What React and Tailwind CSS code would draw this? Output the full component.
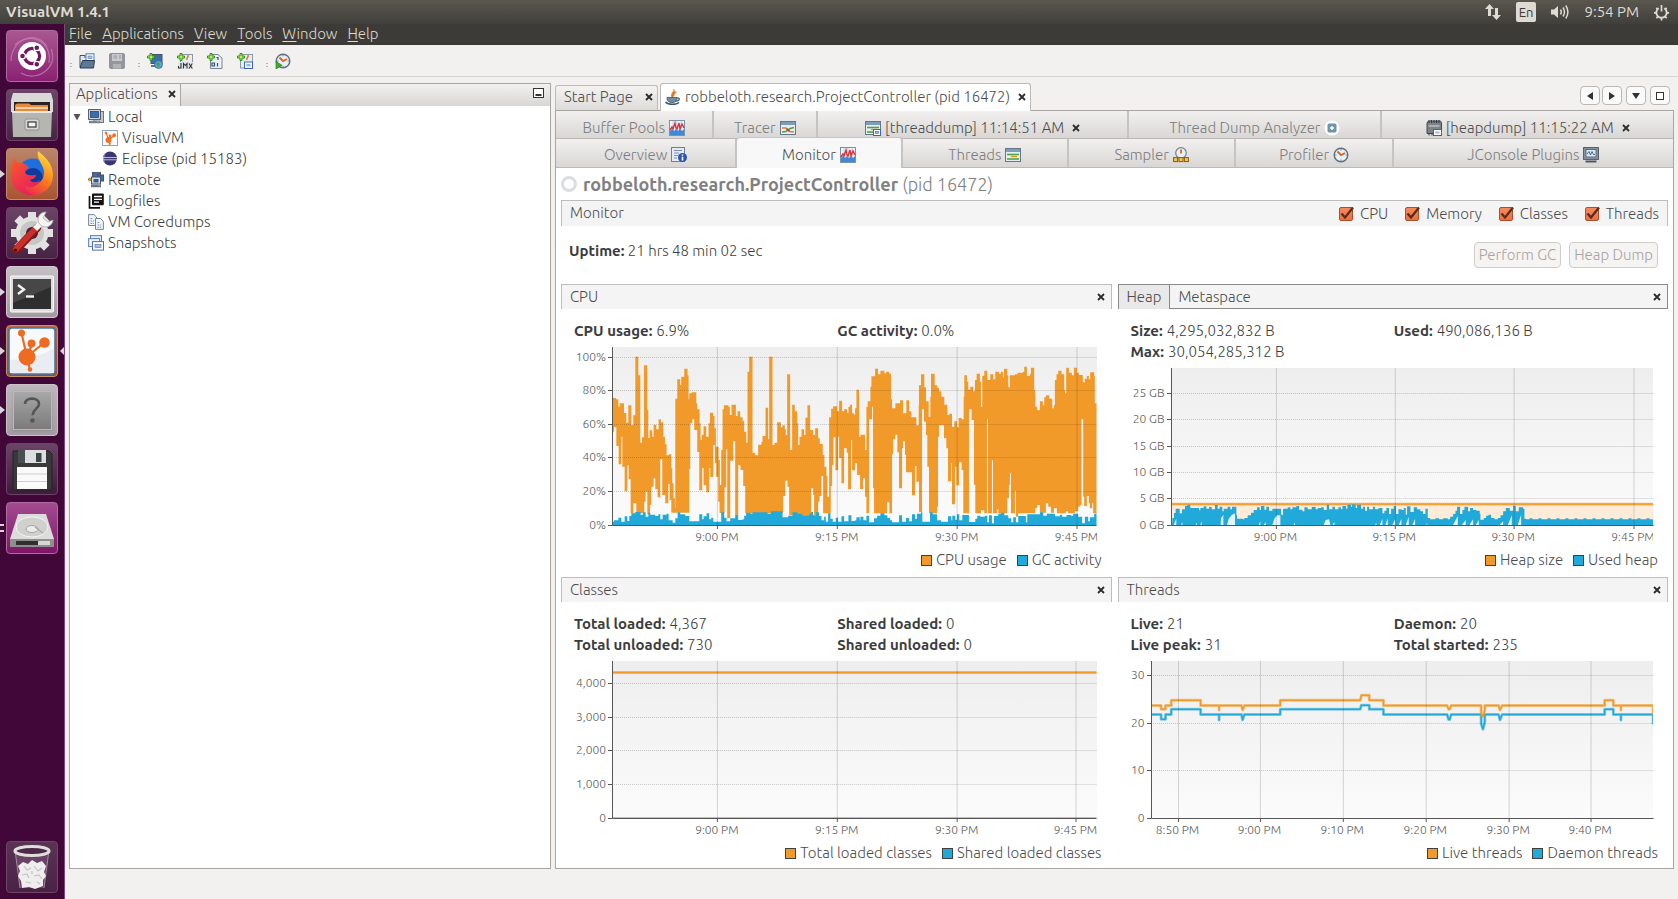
import React from "react";

/* ---------- small drawings ---------- */

function Cross({ className = "" }) {
  return (
    <svg viewBox="0 0 8 8" className={"h-2 w-2 shrink-0 " + className} aria-hidden="true">
      <path d="M1 1L7 7M7 1L1 7" stroke="#2b2b2b" strokeWidth="1.8" />
    </svg>
  );
}

function Icon({ children, className = "" }) {
  return (
    <svg viewBox="0 0 16 16" className={"h-4 w-4 shrink-0 " + className} aria-hidden="true">
      {children}
    </svg>
  );
}

const Plus = () => (
  <path d="M3 0.5H5V3H7.5V5H5V7.5H3V5H0.5V3H3Z" fill="#b9f05c" stroke="#2f8f1d" strokeWidth="1" />
);
const MonitorIcon = () => (
  <Icon>
    <rect x="0.5" y="0.5" width="15" height="15" fill="#eef5fb" stroke="#7d92a8" />
    <path d="M4 1V15M8 1V15M12 1V15" stroke="#c6d3e0" strokeWidth="1" />
    <path d="M1 15V11L3 9L5 11L7 9L9 11L11 9L13 11L15 9V15Z" fill="#3f8ad6" />
    <path d="M1 10L3 7L4 9L6 3L7 8L8 9L10 3L11 9L13 4L15 8" fill="none" stroke="#d6333c" strokeWidth="1.4" />
  </Icon>
);
const ThreadsIcon = ({ cam }) => (
  <Icon>
    <rect x="0.5" y="1.5" width="15" height="13" fill="#e9eef3" stroke="#64788c" />
    <rect x="1" y="2" width="14" height="3" fill="#7f9cba" />
    <path d="M2 7.5H14" stroke="#4fa53c" strokeWidth="1.6" />
    <path d="M6 9.5H12" stroke="#e0912b" strokeWidth="1.2" />
    <path d="M2 12H14" stroke="#4fa53c" strokeWidth="1.6" />
    {cam && <rect x="8.5" y="9.5" width="7" height="6" fill="#fff" stroke="#3d64b4" />}
    {cam && <rect x="10.5" y="11.5" width="3" height="2" fill="#9db8ea" stroke="#3d64b4" strokeWidth="0.6" />}
  </Icon>
);
const TracerIcon = () => (
  <Icon>
    <rect x="0.5" y="1.5" width="15" height="13" fill="#e9eef3" stroke="#64788c" />
    <rect x="1" y="2" width="14" height="3" fill="#7f9cba" />
    <path d="M2 8L6 8L10 11.500L14 12" stroke="#e0802b" strokeWidth="1.6" fill="none" />
    <path d="M2 12L6 11.500L10 8.500L14 7.500" stroke="#4fa53c" strokeWidth="1.6" fill="none" />
    <path d="M6.500 8.500L9.500 11.500" stroke="#d6333c" strokeWidth="1.4" />
  </Icon>
);
const OverviewIcon = () => (
  <Icon>
    <rect x="0.5" y="0.5" width="13" height="14" fill="#e4ebf3" stroke="#6c8096" />
    <path d="M3 3.5H11M3 6H8M3 8.5H7M3 11H6" stroke="#7e93ab" strokeWidth="1" />
    <circle cx="11.5" cy="10.5" r="4.5" fill="#2e55b0" />
    <path d="M11.5 7.5V8.8M11.5 9.8V13.4" stroke="#fff" strokeWidth="1.6" />
  </Icon>
);
const ClockIcon = ({ play }) => (
  <Icon>
    <circle cx="8" cy="8" r="6.8" fill="#e8f1f8" stroke="#5d6f80" strokeWidth="1.4" />
    <path d="M8 2.2V3.4M8 12.6V13.8M2.2 8H3.4M12.6 8H13.8" stroke="#5d6f80" />
    <path d="M4.5 4.5L8 8L12 6" stroke="#e2641b" strokeWidth="1.9" fill="none" />
    {play && <path d="M1 8.5L7 12.2L1 16Z" fill="#3fae2a" stroke="#1f6f14" strokeWidth="0.6" />}
  </Icon>
);
const SamplerIcon = () => (
  <Icon>
    <circle cx="8" cy="6" r="5.3" fill="#e8f1f8" stroke="#6f8090" strokeWidth="1.2" />
    <path d="M8 2.5V6.5" stroke="#e2641b" strokeWidth="1.8" />
    <rect x="0.6" y="10.6" width="4" height="4" fill="#f6c64b" stroke="#8a5a10" />
    <rect x="6" y="10.6" width="4" height="4" fill="#f6c64b" stroke="#8a5a10" />
    <rect x="11.4" y="10.6" width="4" height="4" fill="#f6c64b" stroke="#8a5a10" />
  </Icon>
);
const AnalyzerIcon = () => (
  <Icon>
    <circle cx="8" cy="8" r="7.5" fill="#fff" />
    <rect x="3.5" y="3.5" width="9" height="9" rx="1.5" fill="#6e95ab" />
    <path d="M8 6V10M6 8H10" stroke="#fff" strokeWidth="1.4" />
  </Icon>
);
const HeapDumpIcon = () => (
  <Icon>
    <path d="M1 3L2.5 1H14.500L15.500 3V13.500H1Z" fill="#7d8389" stroke="#43484e" />
    <path d="M3 0V3M5.500 0V3M8 0V3M10.500 0V3M13 0V3M3 13V15.500M6 13V15.500" stroke="#33383c" />
    <rect x="2.500" y="5" width="11" height="2" fill="#a9afb5" />
    <rect x="7.500" y="9.500" width="8" height="6" fill="#fff" stroke="#3d64b4" />
    <rect x="9.500" y="11.500" width="4" height="2" fill="#9db8ea" />
  </Icon>
);
const ConsoleIcon = () => (
  <Icon>
    <rect x="0.6" y="0.6" width="14.800" height="11.800" fill="#8e9aa5" stroke="#4c5863" />
    <rect x="3" y="2.500" width="10" height="7.500" fill="#dbe7f1" stroke="#4c5863" strokeWidth="0.8" />
    <path d="M4 7L6 4.500L7.500 8L9 4.500L10.500 7.500H12" stroke="#2c5d8f" fill="none" strokeWidth="0.9" />
    <path d="M2.500 14.500H13.500" stroke="#4c5863" strokeWidth="2" />
  </Icon>
);
const JavaIcon = () => (
  <Icon>
    <path d="M8.500 0C10.500 2.500 4.500 4 7 8.500C10.500 7 7.500 5.500 11.500 3C9.500 3.500 9.500 2 8.500 0Z" fill="#e8761c" stroke="#e8761c" strokeWidth="0.600" />
    <path d="M2 8.500H12C12 12.500 10 13.500 7 13.500C4 13.500 2 12.500 2 8.500Z" fill="#6f8fa8" stroke="#3b5468" strokeWidth="0.8" />
    <path d="M12 9C15.500 8.500 15 12 10.500 12.200" fill="none" stroke="#3b5468" strokeWidth="1.200" />
    <path d="M0.500 13C3 16 11 16 14 13.500" fill="none" stroke="#3b5468" strokeWidth="1.600" />
  </Icon>
);

/* toolbar */
const OpenIcon = () => (
  <Icon>
    <path d="M1 14V2.500H6V5" fill="#dfe8f1" stroke="#39506b" />
    <rect x="7" y="0.8" width="8" height="7" fill="#fff" stroke="#4f78b5" />
    <rect x="9" y="3" width="4" height="2.500" fill="#a9c2ea" stroke="#4f78b5" strokeWidth="0.6" />
    <path d="M1 15L3.500 7.500H15.500L14.500 15Z" fill="#5d7896" stroke="#2a3e57" />
  </Icon>
);
const SaveIcon = () => (
  <Icon>
    <rect x="0.6" y="0.6" width="14.800" height="14.800" rx="1" fill="#94989d" stroke="#8a8e93" />
    <rect x="3" y="1" width="10" height="7" fill="#c6c9cd" />
    <path d="M4.500 3H8M4.500 5H8M10 3H12M10 5H12" stroke="#94989d" />
    <rect x="4" y="11" width="8" height="4.500" fill="#b0b3b8" />
  </Icon>
);
const AddHostIcon = () => (
  <Icon>
    <rect x="4" y="1.500" width="11" height="9" fill="#3a6db2" stroke="#49535e" />
    <path d="M4 13H12" stroke="#6c757f" strokeWidth="2" />
    <circle cx="11.500" cy="11.500" r="4" fill="#5aa4dc" stroke="#2f5f93" strokeWidth="0.7" />
    <path d="M9 10L12 9L13 12L11 14Z" fill="#4aa33a" />
    <Plus />
  </Icon>
);
const AddJmxIcon = () => (
  <Icon>
    <rect x="3.500" y="1.500" width="12" height="13.500" fill="#e6edf5" stroke="#8a98a8" />
    <path d="M11 2C12 4 9 5 10 7" stroke="#e8761c" fill="none" strokeWidth="1.500" />
    <rect x="1" y="9" width="15" height="7" fill="#e3e7ea" />
    <path d="M4 10V15H1.500V13M6.500 15.500V10.500L8.300 12.500L10 10.500V15.500M12 10.500L15.300 15.500M15.300 10.500L12 15.500" stroke="#2c3238" strokeWidth="1.100" fill="none" />
    <Plus />
  </Icon>
);
const AddCoreIcon = () => (
  <Icon>
    <path d="M3.500 1.500H11L15 5V15.500H3.500Z" fill="#eaf0f6" stroke="#75869a" />
    <path d="M9.500 4.500H11V7M5 10H7.500V13H5ZM10.500 10V13.500" stroke="#3e4f63" fill="none" strokeWidth="1.200" />
    <Plus />
  </Icon>
);
const AddSnapIcon = () => (
  <Icon>
    <rect x="3.500" y="1.500" width="12" height="13.500" fill="#e6edf5" stroke="#8a98a8" />
    <path d="M11 2C12 4 9 5 10 7" stroke="#e8761c" fill="none" strokeWidth="1.500" />
    <rect x="7.500" y="9" width="8" height="6.500" fill="#fff" stroke="#3d64b4" />
    <rect x="9.500" y="11" width="4" height="2.500" fill="#9db8ea" />
    <Plus />
  </Icon>
);

/* tree */
const LocalIcon = () => (
  <Icon>
    <rect x="6" y="2.500" width="9.500" height="11" fill="#c4c9ce" stroke="#6c757f" />
    <rect x="0.6" y="0.6" width="11.800" height="9.800" fill="#dfe3e7" stroke="#49535e" />
    <rect x="2.500" y="2.500" width="8" height="6" fill="#3a6db2" stroke="#23477a" strokeWidth="0.8" />
    <path d="M1 13H12" stroke="#7a838c" strokeWidth="2.500" />
    <path d="M9 12.500H11" stroke="#62d13c" />
  </Icon>
);
const VvmIcon = () => (
  <Icon>
    <rect x="0.5" y="0.5" width="15" height="15" fill="#fdfdfd" stroke="#8aa6c6" />
    <path d="M4 3L7 10L9 5.500M7 10L12 5.500M7 10L8 14" fill="none" stroke="#ef6f23" strokeWidth="1.200" />
    <circle cx="6.500" cy="10" r="3" fill="#ef6f23" />
    <circle cx="4" cy="3" r="1.300" fill="#ef6f23" />
    <circle cx="8" cy="6" r="1.400" fill="#ef6f23" />
    <circle cx="12.200" cy="5.200" r="1.900" fill="#ef6f23" />
    <circle cx="7.700" cy="14" r="1" fill="#ef6f23" />
  </Icon>
);
const EclipseIcon = () => (
  <Icon>
    <circle cx="8" cy="7.500" r="7" fill="#3c3673" />
    <path d="M1 7.500A7 7 0 0 1 5 1.200A9 9 0 0 0 4 13.300A7 7 0 0 1 1 7.500Z" fill="#8d8cc4" />
    <path d="M1 6.500H15M1 8.800H15" stroke="#c3cbe8" strokeWidth="0.9" />
  </Icon>
);
const RemoteIcon = () => (
  <Icon>
    <rect x="4.500" y="0.6" width="8" height="6" fill="#3a6db2" stroke="#49535e" />
    <rect x="9.500" y="3" width="6" height="6" fill="#3a6db2" stroke="#49535e" />
    <rect x="3.500" y="5" width="9" height="7" fill="#d7dce1" stroke="#49535e" />
    <rect x="5.500" y="7" width="5" height="3.500" fill="#2b5ca0" />
    <path d="M3 14H13" stroke="#6c757f" strokeWidth="2.500" />
    <path d="M0 7.500H3" stroke="#49535e" />
    <circle cx="1.800" cy="7.500" r="1.400" fill="#f0a22c" stroke="#8a5a10" strokeWidth="0.6" />
    <path d="M10 13.500H12" stroke="#62d13c" />
  </Icon>
);
const LogIcon = () => (
  <Icon>
    <path d="M1.500 3V14.800H12" fill="none" stroke="#111" strokeWidth="1.700" />
    <rect x="4" y="0.5" width="11.800" height="11.800" rx="1" fill="#111" />
    <path d="M6 3.500H14M6 6.300H14M6 9.200H11" stroke="#fff" strokeWidth="1.300" />
  </Icon>
);
const CoreIcon = () => (
  <Icon>
    <path d="M0.6 0.6H6L8.500 3V11.500H0.6Z" fill="#f0f4f8" stroke="#75869a" />
    <path d="M7.500 4.500H12.500L15.400 7.500V15.400H7.500Z" fill="#f0f4f8" stroke="#75869a" />
    <path d="M2.500 4.500H5M2.500 7H6M2.500 9.500H6M9.500 8.500H12M9.500 11H13.500M9.500 13.300H13.500" stroke="#8296ab" strokeDasharray="1.500 0.700" />
  </Icon>
);
const SnapIcon = () => (
  <Icon>
    <rect x="2.500" y="0.6" width="11" height="8" fill="#e3ebf8" stroke="#5b7fbe" />
    <rect x="0.6" y="3.600" width="11" height="8" fill="#eef3fb" stroke="#5b7fbe" />
    <rect x="4.500" y="6.600" width="11" height="8.500" fill="#fff" stroke="#4a6eb0" />
    <rect x="7" y="9.500" width="6" height="3" fill="#a9bde4" stroke="#4a6eb0" strokeWidth="0.6" />
  </Icon>
);

/* ---------- launcher ---------- */

const tile = "relative flex h-[52px] w-[52px] items-center justify-center rounded-[4px] border ";

const launcher = [
  {
    name: "Search your computer",
    cls: "border-[#b06a9f] bg-linear-to-b from-[#a8578f] to-[#8a1f73]",
    art: (
      <svg viewBox="0 0 50 50" className="h-[50px] w-[50px]">
        <g fill="none" stroke="#c98bbb" strokeWidth="1.2" opacity="0.7">
          <path d="M4 30C4 8 30 -2 40 16" /><path d="M44 18C52 36 30 52 14 42" /><path d="M8 14C22 0 46 10 42 32" />
        </g>
        <circle cx="25" cy="25" r="14" fill="#fff" />
        <circle cx="25" cy="25" r="7.500" fill="none" stroke="#6e1a5b" strokeWidth="3.400" />
        <path d="M25 25L12 25M25 25L31.500 13.700M25 25L31.500 36.300" stroke="#fff" strokeWidth="1.800" />
        <circle cx="25" cy="25" r="5.800" fill="#fff" />
        <g fill="#6e1a5b" stroke="#fff" strokeWidth="1.200"><circle cx="15.500" cy="25" r="2.900" /><circle cx="29.800" cy="16.800" r="2.900" /><circle cx="29.800" cy="33.200" r="2.900" /></g>
      </svg>
    ),
  },
  {
    name: "Files",
    cls: "border-[#6d4568] bg-linear-to-b from-[#6b4468] to-[#472443]",
    art: (
      <svg viewBox="0 0 50 50" className="h-[50px] w-[50px]">
        <path d="M6 3H44L46 10V22H4V10Z" fill="#d9d9d7" />
        <rect x="7" y="12" width="36" height="14" fill="#2a2220" />
        <path d="M8 15L10 13.500H22L24 15H41V26H8Z" fill="#e58a3c" />
        <path d="M9 18H41" stroke="#fbe8cf" strokeWidth="1.400" />
        <path d="M5 21H45L44 47H6Z" fill="#b5b5b2" />
        <path d="M5 21H45V23H5Z" fill="#e6e6e4" />
        <rect x="18" y="29" width="14" height="11" rx="2" fill="#d8d8d6" stroke="#8f8f8c" />
        <rect x="21" y="32" width="8" height="5" fill="#f4f4f4" stroke="#444" strokeWidth="1.300" />
      </svg>
    ),
  },
  {
    name: "Firefox",
    run: true,
    cls: "border-[#c48c6d] bg-linear-to-b from-[#b9856a] to-[#a8552f]",
    art: (
      <svg viewBox="0 0 50 50" className="h-[50px] w-[50px]">
        <defs>
          <linearGradient id="ffy" x1="0.2" y1="1" x2="0.8" y2="0"><stop offset="0" stopColor="#e8145c" /><stop offset="0.5" stopColor="#fb7a1c" /><stop offset="1" stopColor="#ffe43a" /></linearGradient>
          <linearGradient id="ffr" x1="0" y1="0" x2="0.6" y2="1"><stop offset="0" stopColor="#ff5a24" /><stop offset="1" stopColor="#e5205f" /></linearGradient>
        </defs>
        <circle cx="26" cy="25" r="15.500" fill="#1d6fe0" />
        <circle cx="26" cy="29" r="10" fill="#123a9c" />
        <path d="M31 2C37 7 46 14 46 26C46 38 37 46 25 46C13 46 4 37 4 26C6 30 12 37 22 37C32 37 38 30 37 22C36 15 29 10 31 2Z" fill="url(#ffy)" />
        <path d="M8 8C8 12 9 13 11 14C15 13 20 15 22 19C19 20 17 22 19 25C22 27 26 26 29 26C29 29 26 30 23 31C25 34 30 34 33 31C31 37 24 40 18 37C18 41 22 45 27 46C14 47 4 38 4 26C4 18 6 12 8 8Z" fill="url(#ffr)" />
      </svg>
    ),
  },
  {
    name: "System Settings",
    cls: "border-[#6d4568] bg-linear-to-b from-[#6b4468] to-[#472443]",
    art: (
      <svg viewBox="0 0 50 50" className="h-[50px] w-[50px]">
        <g stroke="#e2e2e0" strokeWidth="8"><path d="M25 4V46M4 25H46M10.200 10.200L39.800 39.800M39.800 10.200L10.200 39.800" /></g>
        <circle cx="25" cy="25" r="16.500" fill="#e2e2e0" />
        <circle cx="25" cy="25" r="12" fill="#c6c6c4" />
        <circle cx="25" cy="25" r="6" fill="#43203f" />
        <path d="M9 42L30 20" stroke="#8c1515" strokeWidth="8" strokeLinecap="round" />
        <path d="M9 41L30 19" stroke="#c9302c" strokeWidth="5.500" strokeLinecap="round" />
        <path d="M28 21L36 13" stroke="#f4f4f2" strokeWidth="6" />
        <path d="M39 4A7.500 7.500 0 1 0 46 12L41 14L36 10Z" fill="#f4f4f2" stroke="#b0b0ae" strokeWidth="0.8" />
        <circle cx="8.500" cy="42" r="1.600" fill="#4a0a0a" />
      </svg>
    ),
  },
  {
    name: "Terminal",
    run: true,
    cls: "border-[#cfc8cd] bg-linear-to-b from-[#c6bfc5] to-[#a49ba2]",
    art: (
      <svg viewBox="0 0 50 50" className="h-[50px] w-[50px]">
        <rect x="3.500" y="9" width="43" height="36" rx="1" fill="#dedede" stroke="#f7f7f7" />
        <rect x="6" y="12" width="38" height="30" fill="#2e2e2e" />
        <path d="M6 12H44V20L6 36Z" fill="#474747" />
        <path d="M11 18L17 22.500L11 27" fill="none" stroke="#f2f2f2" strokeWidth="2.400" />
        <path d="M19 29.500H27" stroke="#f2f2f2" strokeWidth="2.400" />
      </svg>
    ),
  },
  {
    name: "VisualVM",
    run: true,
    active: true,
    cls: "border-[#d08e66] bg-linear-to-b from-[#b5683f] to-[#9c4a22]",
    art: (
      <svg viewBox="0 0 50 50" className="h-[50px] w-[50px]">
        <rect x="2" y="2" width="46" height="46" rx="3" fill="#f8f9fb" stroke="#3f78ad" strokeWidth="1.600" />
        <path d="M3 34Q28 34 47 22V47H3Z" fill="#e9ecf0" />
        <path d="M14.500 7L20 31M25 18L20 31L37 16.500M20 31L23 44" fill="none" stroke="#ee6c22" strokeWidth="2.200" />
        <g fill="#ee6c22"><circle cx="20" cy="31" r="8.500" /><circle cx="14.500" cy="7" r="3.500" /><circle cx="24.500" cy="17.500" r="4" /><circle cx="37.500" cy="16.500" r="5.300" /><circle cx="23" cy="43.500" r="2.300" /></g>
      </svg>
    ),
  },
  {
    name: "Unknown application",
    run: true,
    cls: "border-[#c9c4c8] bg-linear-to-b from-[#bdb6bc] to-[#a39ca2]",
    art: (
      <span className="flex h-[39px] w-[39px] items-center justify-center border border-[#b9b9b9] bg-linear-to-b from-[#a8a8a8] to-[#7b7b7b] shadow">
        <svg viewBox="0 0 24 32" className="h-7 w-6">
          <path d="M4 9C4 1 20 1 20 9C20 14 13 15 12.500 22" fill="none" stroke="#555" strokeWidth="3" />
          <circle cx="12.500" cy="28" r="2.600" fill="#555" />
        </svg>
      </span>
    ),
  },
  {
    name: "Floppy disk",
    cls: "border-[#6d4568] bg-linear-to-b from-[#6b4468] to-[#3f1b3b]",
    art: (
      <svg viewBox="0 0 50 50" className="h-[50px] w-[50px]">
        <path d="M6 7H42L45 10V46H6Z" fill="#393939" stroke="#222" />
        <rect x="11" y="6" width="28" height="13" fill="#4b4f52" />
        <rect x="18" y="6" width="21" height="13" fill="#dddedf" />
        <rect x="29" y="9" width="5.500" height="9" fill="#3d4347" />
        <rect x="10" y="23" width="30" height="22" fill="#fafafa" />
        <path d="M10 30H40M10 37.500H40" stroke="#cfcfcf" />
      </svg>
    ),
  },
  {
    name: "Disk drive",
    mark: true,
    cls: "border-[#b06a9f] bg-linear-to-b from-[#a34b91] to-[#7d1569]",
    art: (
      <svg viewBox="0 0 50 50" className="h-[50px] w-[50px]">
        <path d="M11 11H39L47 36V44H3V36Z" fill="#dcdcda" />
        <path d="M3 36H47V44H3Z" fill="#8e8e8c" />
        <rect x="9" y="38" width="31" height="4" fill="#2f2f2f" />
        <rect x="31" y="38" width="12" height="4" fill="#d6d6d4" />
        <ellipse cx="25" cy="24" rx="16" ry="10" fill="#d0d0ce" stroke="#f4f4f2" />
        <ellipse cx="25" cy="26" rx="6" ry="3.500" fill="#ececea" stroke="#a5a5a3" />
        <path d="M36 30L28 24" stroke="#aaa" strokeWidth="1.500" />
      </svg>
    ),
  },
];

function Trash() {
  return (
    <svg viewBox="0 0 50 50" className="h-[50px] w-[50px]">
      <path d="M8 8L13 46H37L42 8Z" fill="#6d4868" opacity="0.8" />
      <path d="M8 8L13 46M42 8L37 46" stroke="#a58aa1" />
      <path d="M11 24L16 20L21 22L25 18L30 21L35 19L39 24L37 30L39 34L36 38L36 44L28 47L22 45L15 46L14 39L11 34L13 29Z" fill="#eeeeec" />
      <path d="M17 24L20 28L24 26M27 24L31 29L35 26M15 33L20 32L22 36M27 34L32 33L35 37M25 29V32M19 40L24 41M30 40L33 42" stroke="#c4c4c1" strokeWidth="1.200" fill="none" />
      <ellipse cx="25" cy="9" rx="17" ry="4.500" fill="#4c2a48" stroke="#dededc" strokeWidth="3.200" />
    </svg>
  );
}

function Launcher() {
  return (
    <nav aria-label="Launcher" className="flex w-[65px] shrink-0 flex-col items-center justify-between border-r border-[#7b4a78] bg-[#400738] pt-1.5 pb-1.5">
      <div className="flex w-full flex-col items-center gap-[7px]">
        {launcher.map((l) => (
          <div key={l.name} className="relative flex w-full justify-center">
            {l.run && <span className="absolute top-[22px] left-0 h-0 w-0 border-y-4 border-l-5 border-y-transparent border-l-[#d8d4d7]" />}
            {l.mark && <span className="absolute top-[22px] left-0 h-2 w-1 border-y-2 border-[#d8d4d7]" />}
            {l.active && <span className="absolute top-[22px] right-0 h-0 w-0 border-y-4 border-r-4 border-y-transparent border-r-[#d8d4d7]" />}
            <button aria-label={l.name} className={tile + l.cls}>{l.art}</button>
          </div>
        ))}
      </div>
      <button aria-label="Trash" className={tile + "border-[#6d4568] bg-linear-to-b from-[#5a3355] to-[#4a2246]"}>
        <Trash />
      </button>
    </nav>
  );
}

/* ---------- charts ---------- */

const ORANGE = "#f19a29";
const BLUE = "#21aad9";

function Chart({ w, h, plotClass, padClass, ys, xs, children, box }) {
  return (
    <div>
      <div className={"relative mt-1.5 mr-[15px] bg-linear-to-b from-[#eeeeee] to-[#fbfbfb] " + plotClass}>
        <svg viewBox={box} preserveAspectRatio="none" className="absolute inset-0 h-full w-full" aria-hidden="true">
          {children}
        </svg>
        <svg viewBox={`0 0 ${w} ${h}`} preserveAspectRatio="none" className="absolute inset-0 h-full w-full overflow-visible" shapeRendering="crispEdges" aria-hidden="true">
          {ys.map(([y]) => (
            <path key={y} d={`M0 ${y + 0.5}H${w}`} stroke="#000" strokeOpacity="0.2" strokeDasharray="1 1" />
          ))}
          {xs.map(([x]) => (
            <path key={x} d={`M${x + 0.5} 0V${h}`} stroke="#000" strokeOpacity="0.16" />
          ))}
          <path d={`M0.5 0V${h + 0.5}H${w}`} fill="none" stroke="#555" />
          {ys.map(([y]) => (
            <path key={y} d={`M-4 ${y + 0.5}H0`} stroke="#555" />
          ))}
          {xs.map(([x]) => (
            <path key={x} d={`M${x + 0.5} ${h}V${h + 4}`} stroke="#555" />
          ))}
        </svg>
        {ys.map(([y, t]) => (
          <span key={t} className="absolute right-full mr-1.5 -translate-y-1/2 text-xs leading-4 whitespace-nowrap text-[#5a5a5a]" style={{ top: `${(y / h) * 100}%` }}>
            {t}
          </span>
        ))}
      </div>
      <div className={"mr-[15px] overflow-hidden " + padClass}>
        <div className="relative h-[25px]">
          {xs.map(([x, t]) => (
            <span key={t} className="absolute top-1 -translate-x-1/2 text-xs leading-4 whitespace-nowrap text-[#5a5a5a]" style={{ left: `${(x / w) * 100}%` }}>
              {t}
            </span>
          ))}
        </div>
      </div>
    </div>
  );
}

const cpuTop1 = "8:174 20:178 27:200 31:190 44:219 51:248 57:196 66:255 72:226 78:50 87:106 93:308 98:292 104:76 114:210 117:294 121:271 129:290 133:254 141:268 148:238 155:247 162:290 167:313 172:346 178:343 186:385 189:430 193:475 197:505 198:176 204:118 213:135 216:110 225:86 235:106 238:178 240:160 248:157 261:190 264:208 271:250 274:300 278:284 283:259 291:290 298:250 302:218 312:228 316:265 320:320 328:360 332:435 336:330 340:208 344:196 358:200 362:225 367:194 380:228 385:214 393:232 400:242 405:275 411:308 415:95 420:50 430:338 438:346 447:314 457:305 460:288 469:203 477:298 480:50 490:315 496:308 504:247 515:262 520:256 527:268 530:285 534:103 543:330 549:194 557:214 564:250 567:315 571:290 577:268 585:285 589:233 595:196 603:270 612:285 618:265 627:295 632:312 641:345 646:380 652:408 655:470 660:232 666:206 672:199 684:214 690:182 699:214 705:208 714:219 718:200 723:194 729:220 735:224";
const cpuTop2 = "0:205 4:149 12:290 16:284 30:330 34:200 38:184 46:140 49:109 60:86 69:103 76:92 88:100 93:95 103:101 108:178 111:205 121:190 135:181 144:220 154:181 162:214 169:232 184:256 191:196 192:136 198:103 208:142 213:184 221:230 226:170 228:101 239:136 247:143 252:154 259:170 268:194 277:225 283:221 291:260 298:244 306:262 311:234 320:238 326:170 328:106 336:125 340:149 346:140 355:154 360:120 365:101 375:125 378:200 382:107 388:92 397:120 406:103 415:118 421:95 432:101 438:95 444:113 447:86 457:106 460:142 465:106 480:103 488:98 504:95 508:80 516:108 525:103 528:83 538:150 541:200 547:211 555:184 564:196 568:172 573:166 583:176 592:205 597:195 600:120 605:103 610:92 620:103 628:150 631:160 634:83 642:98 651:106 657:83 666:98 672:105 684:127 690:116 696:108 702:118 706:97 718:108 720:190";
const cpuLow1 = "8:275 14:262 21:318 28:373 36:290 39:380 46:454 54:376 58:418 64:520 72:490 81:520 105:485 109:455 114:522 122:495 126:440 133:415 138:448 145:472 153:358 159:465 168:490 177:432 181:480 186:518 240:387 243:250 249:238 255:270 264:336 270:451 279:384 283:436 291:457 300:384 303:411 312:315 317:370 321:410 327:485 331:519 346:442 351:328 354:535 363:362 372:304 378:524 387:376 394:390 402:438 408:520 522:468 528:422 535:440 540:526 606:445 612:465 615:525 627:485 631:468 637:408 642:520 665:438 669:375 673:292 679:391 687:290 690:354 697:430 705:325 713:338 717:448 726:300 729:391";
const cpuLow2 = "0:370 6:405 15:447 24:415 30:470 34:520 42:238 51:200 54:445 57:520 96:487 103:520 111:343 114:298 121:284 127:337 132:445 141:325 144:304 150:345 153:397 171:466 180:378 184:425 192:517 201:208 207:245 213:285 217:380 222:520 246:500 249:290 252:256 267:295 274:325 279:424 289:370 291:493 300:380 304:436 312:367 320:390 325:520 342:208 350:240 357:434 361:520 378:511 388:520 396:238 399:520 411:361 414:520 426:508 430:520 457:475 462:436 465:400 468:520 480:454 483:530 490:520 541:505 547:495 555:518 573:490 580:500 588:518 597:505 606:520 633:514 640:520 660:514 670:500 675:496 680:238 685:470 688:498 696:468 702:490 705:505 712:490 715:520";
const gc1 = "8:545 14:541 27:533 36:545 46:529 54:543 60:528 66:520 78:516 94:524 101:517 109:530 117:518 123:524 138:528 147:523 153:538 160:524 172:521 178:541 190:548 198:535 205:517 213:523 228:528 240:544 270:523 279:538 283:529 292:520 300:538 306:533 312:545 336:517 345:533 352:544 363:535 378:524 387:540 400:538 405:527 411:518 424:521 430:517 475:521 485:514 520:532 537:527 550:517 565:521 580:526 600:521 606:516 612:526 620:517 630:528 637:541 645:530 650:545 657:520 664:536 671:545 680:533 687:545 697:529 705:544 718:526 727:543";
const gc2 = "0:541 4:532 14:541 16:530 25:541 34:527 42:547 57:535 66:527 76:520 88:526 97:534 105:541 111:547 132:526 141:545 153:534 162:544 171:523 180:536 186:521 198:517 202:545 225:517 233:523 246:541 258:545 279:529 289:541 292:527 301:539 306:523 313:541 322:525 342:546 361:536 367:527 376:530 390:527 397:547 402:526 411:550 417:528 430:521 438:518 448:526 460:535 469:547 475:532 483:547 490:528 513:547 517:523 555:517 565:527 576:521 600:529 615:524 622:530 635:525 648:527 655:521 670:530 682:550 690:530 700:544 705:532 718:521";
const heap = "20:85 24:70 29:55 34:42 46:56 53:44 62:34 69:30 78:40 104:47 108:40 118:35 126:42 134:37 142:44 152:31 160:42 166:36 174:50 178:42 190:36 198:44 203:36 216:60 218:72 236:74 240:70 250:62 260:54 268:46 278:38 286:46 290:34 300:45 306:36 314:48 324:42 334:42 350:60 356:42 370:38 378:44 384:38 396:34 404:45 414:50 420:38 430:44 442:37 454:44 460:40 470:38 478:46 487:30 494:44 504:36 512:44 522:38 530:44 534:34 545:42 549:30 560:36 563:29 574:40 578:30 590:42 596:36 602:48 608:36 614:44 626:36 632:44 642:40 654:56 660:48 666:40 674:58 680:42 688:34 695:58 702:44 712:46 718:40 724:60 728:35 738:52 748:38 758:44 768:50 776:58 783:42 790:70 797:74 813:71 824:74 836:71 850:74 857:66 866:58 873:48 878:36 887:58 894:46 900:36 911:50 917:40 926:46 936:48 946:58 948:75 958:70 965:63 972:60 980:70 990:74 1000:70 1008:62 1016:50 1024:40 1036:48 1046:33 1054:50 1063:38 1076:42 1080:72";

const parse = (s, off = 0) => s.split(" ").map((p) => { const [x, y] = p.split(":").map(Number); return [x + off, y]; });
function steps(points, end) {
  const out = [];
  points.forEach(([x, y], i) => {
    const next = i + 1 < points.length ? points[i + 1][0] : end;
    out.push([x, y], [next, y]);
  });
  return out;
}
const toPath = (pts) => "M" + pts.map((p) => p.join(" ")).join("L");

const cpuUpper = steps([...parse(cpuTop1), ...parse(cpuTop2, 738)], 1463);
const cpuLower = steps([...parse(cpuLow1), ...parse(cpuLow2, 738)], 1463);
const cpuPath = toPath([...cpuUpper, ...cpuLower.reverse()]) + "Z";
const gcPath = toPath([...steps([...parse(gc1), ...parse(gc2, 738)], 1463), [1463, 556], [8, 556]]) + "Z";
const idle = [];
for (let x = 1086, i = 0; x < 1467; x += 9, i++) idle.push([x, i % 3 === 1 ? 71 : 74]);
const heapPath = toPath([...steps([...parse(heap), ...idle], 1467), [1467, 92], [20, 92]]) + "Z";
const heapGaps =
  "M28 91L33 78L36 72V91ZM50 91L54 82V91ZM94 91L98 84V91ZM108 91L112 80V91ZM169 91L170 70L177 61V91ZM188 91L193 72L203 60L212 56V91ZM283 91L288 80V91ZM298 91L304 82V91ZM324 91L330 72L338 62L348 62V91ZM388 91L392 84V91ZM478 91L484 76L494 74L498 91ZM504 91L510 82V91ZM632 91L636 84V91ZM646 91L654 72V91ZM663 91L670 70V91ZM684 91L692 74V91ZM703 91L711 72V91ZM724 91L733 66V91ZM744 91L752 72V91ZM786 91L788 84V91ZM866 91L880 64V91ZM892 91L904 76V91ZM915 91L926 74V91ZM934 91L943 76V91ZM1006 91L1016 80V91ZM1030 91L1042 62V91ZM1060 91L1070 60V91Z";

const liveLine = "M115 407H142V418H154V407H170V391H251V407H302V420V407H364L367 420L372 407H471V391H692L695 376H717V391H756V407H932L936 418H939L943 407H1026V430L1031 440L1036 420V407H1074L1078 420L1084 407H1367V391H1391V407H1412V420V407H1501V434";
const daemonLine = "M115 434H142V448H154V434H170V418H251V434H302V450V434H364L367 450L372 434H471V418H692L695 406H717V418H756V434H932L936 449H939L943 434H1026V462L1031 478L1036 455V434H1074L1078 450L1084 434H1367V418H1391V434H1412V450V434H1501V463";

function Line({ d, color }) {
  return (
    <g fill="none" stroke={color} strokeLinejoin="round">
      <path d={d} strokeOpacity="0.5" strokeWidth="3" vectorEffect="non-scaling-stroke" />
      <path d={d} strokeWidth="1.500" vectorEffect="non-scaling-stroke" />
    </g>
  );
}

/* ---------- panels ---------- */

function Legend({ a, b }) {
  return (
    <div className="flex justify-end gap-2.5 pr-2.5 leading-5">
      {[[a, "bg-[#f19a29]"], [b, "bg-[#21aad9]"]].map(([t, c]) => (
        <span key={t} className="flex items-center gap-1">
          <i className={"h-[11px] w-[11px] border border-[#404040] " + c} />
          {t}
        </span>
      ))}
    </div>
  );
}

function Panel({ title, tabs, stats, children, legend }) {
  return (
    <section>
      <header className={"flex h-[25px] items-stretch border-t border-r border-l bg-[#f4f4f4] leading-5 " + (tabs ? "border-[#8a8a8a]" : "border-[#bdbdbd]")}>
        {tabs ? (
          <>
            <button className="border-r border-[#8a8a8a] bg-[#e9e9e9] px-2">{tabs[0]}</button>
            <button className="grow border-b border-[#8a8a8a] px-2 text-left">{tabs[1]}</button>
          </>
        ) : (
          <h3 className="grow px-2 leading-6">{title}</h3>
        )}
        <button aria-label="Close" className={"flex items-center pr-1.5 " + (tabs ? "border-b border-[#8a8a8a]" : "")}>
          <Cross />
        </button>
      </header>
      <dl className="grid grid-cols-2 pt-[11px] leading-[21px] text-[#3c3c3c]">
        {stats.map(([k, v], i) => (
          <div key={k} className={"flex gap-1 " + (i % 2 ? "pl-px" : "pl-[13px]")}>
            <dt className="font-bold">{k}:</dt>
            <dd>{v}</dd>
          </div>
        ))}
      </dl>
      {children}
      <Legend a={legend[0]} b={legend[1]} />
    </section>
  );
}

function InnerTab({ label, icon, before, grow, active, close, row }) {
  const tone = active
    ? "-mt-0.5 -mb-px rounded-t-[4px] border-t border-[#bdbab6] bg-[#f8f8f8] text-[#4c4c4c]"
    : "bg-linear-to-b from-[#f2f1f0] to-[#d9d7d5] " + (close ? "text-[#4c4c4c]" : "text-[#7c7c7c]");
  return (
    <button role="tab" aria-selected={!!active} className={"flex items-center justify-center gap-1 border-r-2 border-[#c6c4c1] leading-5 whitespace-nowrap last:border-r-0 " + (row === 1 ? "pt-1.5 " : "pt-1 ") + grow + " " + tone}>
      {before}
      {label}
      {icon}
      {close && <Cross className="ml-1" />}
    </button>
  );
}

const tree = [
  [<LocalIcon />, "Local", "pl-[18px]"],
  [<VvmIcon />, "VisualVM", "pl-8"],
  [<EclipseIcon />, "Eclipse (pid 15183)", "pl-8"],
  [<RemoteIcon />, "Remote", "pl-[18px]"],
  [<LogIcon />, "Logfiles", "pl-[18px]"],
  [<CoreIcon />, "VM Coredumps", "pl-[18px]"],
  [<SnapIcon />, "Snapshots", "pl-[18px]"],
];

const tool = "flex h-6 w-[30px] items-center justify-center";
const navBtn = "flex h-[19px] w-5 items-center justify-center rounded-[4px] border border-[#bab7b3] bg-[#fafafa]";

function Grip() {
  return <span className="mt-2 h-1 w-0.5 border-y border-[#b5b3b0]" />;
}

export default function App() {
  return (
    <div className="flex min-h-screen flex-col bg-[#f2f1f0] font-['Ubuntu','Noto_Sans',sans-serif] text-[15px] font-light text-[#4c4c4c]">
      <header className="flex h-6 items-center justify-between bg-linear-to-b from-[#5a574e] to-[#403f3a] pr-2 pl-1.5 text-[#dfdbd2]">
        <h1 className="font-bold">VisualVM 1.4.1</h1>
        <div className="flex items-center gap-3.5 font-normal">
          <svg viewBox="0 0 18 18" className="h-[18px] w-[18px]" aria-hidden="true">
            <path d="M5.500 1L10 6H7V13H4V6H1ZM12.500 17L8 12H11V5H14V12H17Z" fill="#dfdbd2" />
          </svg>
          <span className="rounded-[2px] bg-[#dfdbd2] px-[3px] text-[13px] leading-5 text-[#3c3b37]">En</span>
          <svg viewBox="0 0 20 18" className="h-[18px] w-5" aria-hidden="true">
            <path d="M1 6.500H4L8 3V15L4 11.500H1Z" fill="#dfdbd2" />
            <path d="M10.500 6.500Q12 9 10.500 11.500M13 4.500Q16 9 13 13.500M15.800 2.500Q20 9 15.800 15.500" fill="none" stroke="#dfdbd2" strokeWidth="1.500" />
          </svg>
          <time>9:54 PM</time>
          <svg viewBox="0 0 18 18" className="h-[17px] w-[17px]" aria-hidden="true">
            <path d="M6 4.500A5.500 5.500 0 1 0 12 4.500" fill="none" stroke="#dfdbd2" strokeWidth="2" />
            <path d="M9 1V8M3.500 4L5 5.500M14.500 4L13 5.500M1 9.500H3.500M14.500 9.500H17M3.500 15L5 13.500M14.500 15L13 13.500M9 15V17.500" stroke="#dfdbd2" strokeWidth="1.800" />
          </svg>
        </div>
      </header>

      <div className="flex grow">
        <Launcher />
        <div className="flex min-w-0 grow flex-col">
          <nav aria-label="Menu" className="flex h-[21px] items-center gap-2.5 bg-[#3c3b37] pb-0.5 pl-1 text-[#dfdbd2]">
            {["File", "Applications", "View", "Tools", "Window", "Help"].map((m) => (
              <button key={m} className="leading-5"><u className="underline-offset-2">{m[0]}</u>{m.slice(1)}</button>
            ))}
          </nav>

          <div role="toolbar" className="flex h-8 items-center border-b border-[#d8d6d3] pl-[5px]">
            <Grip />
            <button aria-label="Open" className={tool}><OpenIcon /></button>
            <button aria-label="Save" disabled className={tool}><SaveIcon /></button>
            <span className="ml-1.5 flex items-center"><Grip /></span>
            <button aria-label="Add remote host" className={tool}><AddHostIcon /></button>
            <button aria-label="Add JMX connection" className={tool}><AddJmxIcon /></button>
            <button aria-label="Add VM coredump" className={tool}><AddCoreIcon /></button>
            <button aria-label="Add snapshot" className={tool}><AddSnapIcon /></button>
            <span className="ml-1.5 flex items-center"><Grip /></span>
            <button aria-label="Profile startup" className={tool}><ClockIcon play /></button>
          </div>

          <main className="flex grow gap-1 pt-1.5 pr-1 pb-[30px] pl-1">
            {/* applications tree */}
            <aside className="flex w-[482px] shrink-0 flex-col border border-[#a9a6a2] bg-white">
              <div className="flex h-[22px] items-stretch justify-between bg-linear-to-b from-[#f2f1f0] to-[#d9d7d5]">
                <button role="tab" aria-selected="true" className="flex items-center gap-2.5 border-r border-[#a9a6a2] bg-[#f2f1f0] pr-1 pb-0.5 pl-1.5 leading-5">
                  Applications
                  <Cross />
                </button>
                <button aria-label="Minimize" className="flex items-center pr-1.5 pb-1">
                  <svg viewBox="0 0 11 10" className="h-2.5 w-[11px]"><rect x="0.500" y="0.500" width="10" height="9" fill="#fff" stroke="#333" /><rect x="2.500" y="6" width="6" height="2" fill="#333" /></svg>
                </button>
              </div>
              <ul className="leading-[21px]">
                {tree.map(([icon, t, pad]) => (
                  <li key={t} className={"relative flex items-center gap-1 text-[#3c3c3c] " + pad}>
                    {t === "Local" && (
                      <svg viewBox="0 0 8 8" className="absolute left-[3px] h-2 w-2"><path d="M0.500 1H7.500L4 7.500Z" fill="#555" /></svg>
                    )}
                    {icon}
                    {t}
                  </li>
                ))}
              </ul>
            </aside>

            {/* editor area */}
            <div className="flex min-w-0 grow flex-col">
              <div className="flex h-[27px] items-end justify-between">
                <div role="tablist" className="flex items-end gap-0.5">
                  <button role="tab" aria-selected="false" className="flex h-[25px] items-center gap-3 rounded-t-[3px] border-t border-r border-l border-[#bdbab6] bg-linear-to-b from-[#f4f3f2] to-[#dedcda] pr-1 pb-0.5 pl-2 leading-5">
                    Start Page
                    <Cross />
                  </button>
                  <button role="tab" aria-selected="true" className="relative -mb-px flex h-7 items-center gap-1 rounded-t-[3px] border-t border-r border-l border-[#bdbab6] bg-white pr-1 pb-0.5 pl-1 leading-5">
                    <JavaIcon />
                    robbeloth.research.ProjectController (pid 16472)
                    <Cross className="ml-1" />
                  </button>
                </div>
                <div className="flex items-center pr-1 pb-[5px]">
                  <button aria-label="Scroll left" className={navBtn}><svg viewBox="0 0 8 8" className="h-2 w-2"><path d="M7 0V8L1 4Z" fill="#333" /></svg></button>
                  <button aria-label="Scroll right" className={navBtn + " ml-0.5"}><svg viewBox="0 0 8 8" className="h-2 w-2"><path d="M1 0V8L7 4Z" fill="#333" /></svg></button>
                  <button aria-label="Show opened documents" className={navBtn + " ml-1"}><svg viewBox="0 0 8 8" className="h-2 w-2"><path d="M0 1H8L4 7Z" fill="#333" /></svg></button>
                  <button aria-label="Maximize" className={navBtn + " ml-1"}><svg viewBox="0 0 8 8" className="h-2 w-2"><rect x="0.500" y="0.500" width="7" height="7" fill="#fff" stroke="#333" /></svg></button>
                </div>
              </div>

              <div className="grow border border-[#a9a6a2] bg-white">
                <div role="tablist" className="bg-[#d9d7d5]">
                  <div className="flex h-[27px]">
                    <InnerTab row={1} grow="flex-[157_1_0%]" label="Buffer Pools" icon={<MonitorIcon />} />
                    <InnerTab row={1} grow="flex-[103_1_0%]" label="Tracer" icon={<TracerIcon />} />
                    <InnerTab row={1} grow="flex-[312_1_0%]" label="[threaddump] 11:14:51 AM" before={<ThreadsIcon cam />} close />
                    <InnerTab row={1} grow="flex-[253_1_0%]" label="Thread Dump Analyzer" icon={<AnalyzerIcon />} />
                    <InnerTab row={1} grow="flex-[293_1_0%]" label="[heapdump] 11:15:22 AM" before={<HeapDumpIcon />} close />
                  </div>
                  <div className="relative flex h-[30px] border-y border-[#bdbab6]">
                    <InnerTab row={2} grow="flex-[181_1_0%]" label="Overview" icon={<OverviewIcon />} />
                    <InnerTab row={2} grow="flex-[165_1_0%]" label="Monitor" icon={<MonitorIcon />} active />
                    <InnerTab row={2} grow="flex-[166_1_0%]" label="Threads" icon={<ThreadsIcon />} />
                    <InnerTab row={2} grow="flex-[167_1_0%]" label="Sampler" icon={<SamplerIcon />} />
                    <InnerTab row={2} grow="flex-[157_1_0%]" label="Profiler" icon={<ClockIcon />} />
                    <InnerTab row={2} grow="flex-[282_1_0%]" label="JConsole Plugins" icon={<ConsoleIcon />} />
                  </div>
                </div>

                <div className="px-[5px] pb-1">
                  <h2 className="flex h-8 items-center gap-1.5 text-lg text-[#808080]">
                    <i className="h-4 w-4 rounded-full border-3 border-[#dcdde0]" />
                    <span><b className="font-bold">robbeloth.research.ProjectController</b> (pid 16472)</span>
                  </h2>

                  <div className="flex h-[26px] items-center justify-between border-t border-r border-l border-[#bdbdbd] bg-[#f4f4f4] px-2 leading-5">
                    <h3 className="self-start leading-6">Monitor</h3>
                    <div className="flex gap-4">
                      {["CPU", "Memory", "Classes", "Threads"].map((c) => (
                        <label key={c} className="flex items-center gap-1.5">
                          <span className="relative flex h-4 w-4">
                            <input type="checkbox" defaultChecked className="m-px h-3.5 w-3.5 appearance-none rounded-[2px] border border-[#a8502f] bg-linear-to-b from-[#f58a5f] to-[#ee6f3c]" />
                            <svg viewBox="0 0 16 16" className="pointer-events-none absolute inset-0 h-4 w-4"><path d="M3.500 7.500L7 11.500L15 1.500" fill="none" stroke="#5b2c1c" strokeWidth="2.300" /></svg>
                          </span>
                          {c}
                        </label>
                      ))}
                    </div>
                  </div>

                  <div className="flex h-[58px] items-start justify-between pt-4 pr-2.5 pl-2">
                    <p className="leading-[18px] text-[#3c3c3c]"><b className="font-bold">Uptime:</b> 21 hrs 48 min 02 sec</p>
                    <div className="flex gap-2">
                      <button disabled className="h-[26px] rounded-[4px] border border-[#cfcdca] bg-[#f5f4f3] px-1 text-[#a5a3a0]">Perform GC</button>
                      <button disabled className="h-[26px] rounded-[4px] border border-[#cfcdca] bg-[#f5f4f3] px-1 text-[#a5a3a0]">Heap Dump</button>
                    </div>
                  </div>

                  <div className="grid grid-cols-2 gap-x-1.5 gap-y-[7px]">
                    <Panel title="CPU" stats={[["CPU usage", "6.9%"], ["GC activity", "0.0%"]]} legend={["CPU usage", "GC activity"]}>
                      <Chart w={485} h={178} box="8 21 1455 534" plotClass="ml-[51px] h-[178px]" padClass="pl-[51px]"
                        ys={[[10, "100%"], [43, "80%"], [77, "60%"], [110, "40%"], [144, "20%"], [178, "0%"]]}
                        xs={[[105, "9:00 PM"], [225, "9:15 PM"], [345, "9:30 PM"], [465, "9:45 PM"]]}>
                        <path d={cpuPath} fill={ORANGE} />
                        <path d={gcPath} fill={BLUE} />
                      </Chart>
                    </Panel>
                    <Panel tabs={["Heap", "Metaspace"]} stats={[["Size", "4,295,032,832 B"], ["Used", "490,086,136 B"], ["Max", "30,054,285,312 B"]]} legend={["Heap size", "Used heap"]}>
                      <Chart w={483} h={157} box="20 -380 1447 471" plotClass="ml-[53px] h-[157px]" padClass="pl-[53px]"
                        ys={[[25, "25 GB"], [51, "20 GB"], [78, "15 GB"], [104, "10 GB"], [130, "5 GB"], [157, "0 GB"]]}
                        xs={[[105, "9:00 PM"], [224, "9:15 PM"], [343, "9:30 PM"], [463, "9:45 PM"]]}>
                        <path d="M20 28H1467V91H20Z" fill="#feecd9" />
                        <path d="M20 28.500H1467" stroke="#f5b564" strokeWidth="8" />
                        <path d="M20 28.500H1467" stroke={ORANGE} strokeWidth="4" />
                        <path d={heapPath} fill={BLUE} />
                        <path d={heapGaps} fill="#e0f5fd" />
                      </Chart>
                    </Panel>
                    <Panel title="Classes" stats={[["Total loaded", "4,367"], ["Shared loaded", "0"], ["Total unloaded", "730"], ["Shared unloaded", "0"]]} legend={["Total loaded classes", "Shared loaded classes"]}>
                      <Chart w={485} h={157} box="0 0 485 157" plotClass="ml-[51px] h-[157px]" padClass="pl-[51px]"
                        ys={[[22, "4,000"], [56, "3,000"], [89, "2,000"], [123, "1,000"], [157, "0"]]}
                        xs={[[105, "9:00 PM"], [225, "9:15 PM"], [345, "9:30 PM"], [464, "9:45 PM"]]}>
                        <path d="M0 11.500H485" stroke="#f5b564" strokeWidth="3" />
                        <path d="M0 11.500H485" stroke={ORANGE} strokeWidth="1" />
                        <path d="M0 156.500H485" stroke="#8fd0ea" strokeWidth="1" />
                      </Chart>
                    </Panel>
                    <Panel title="Threads" stats={[["Live", "21"], ["Daemon", "20"], ["Live peak", "31"], ["Total started", "235"]]} legend={["Live threads", "Daemon threads"]}>
                      <Chart w={503} h={157} box="114 273 1388 472" plotClass="ml-[33px] h-[157px]" padClass="pl-[33px]"
                        ys={[[14, "30"], [62, "20"], [109, "10"], [157, "0"]]}
                        xs={[[27, "8:50 PM"], [109, "9:00 PM"], [192, "9:10 PM"], [275, "9:20 PM"], [358, "9:30 PM"], [440, "9:40 PM"]]}>
                        <Line d={daemonLine} color={BLUE} />
                        <Line d={liveLine} color={ORANGE} />
                      </Chart>
                    </Panel>
                  </div>
                </div>
              </div>
            </div>
          </main>
        </div>
      </div>
    </div>
  );
}
